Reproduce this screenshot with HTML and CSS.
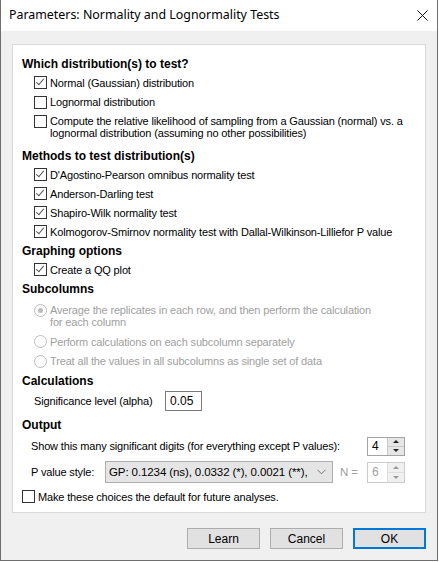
FILE: index.html
```html
<!DOCTYPE html>
<html>
<head>
<meta charset="utf-8">
<link rel="stylesheet" href="styles.css">
</head>
<body>
<div class="window">
  <div class="titlebar">
    <span class="title">Parameters: Normality and Lognormality Tests</span>
    <svg class="close" width="11" height="11" viewBox="0 0 11 11"><path d="M0.5 0.5 L10.5 10.5 M10.5 0.5 L0.5 10.5" stroke="#111" stroke-width="1" fill="none"/></svg>
  </div>
  <div class="body">
    <div class="panel">
      <div class="h h1">Which distribution(s) to test?</div>
      <div class="row r-normal"><span class="cb on"></span><span>Normal (Gaussian) distribution</span></div>
      <div class="row r-log"><span class="cb"></span><span>Lognormal distribution</span></div>
      <div class="row multi r-compute"><span class="cb"></span><span class="ml">Compute the relative likelihood of sampling from a Gaussian (normal) vs. a<br>lognormal distribution (assuming no other possibilities)</span></div>
      <div class="h">Methods to test distribution(s)</div>
      <div class="row"><span class="cb on"></span><span>D'Agostino-Pearson omnibus normality test</span></div>
      <div class="row"><span class="cb on"></span><span>Anderson-Darling test</span></div>
      <div class="row"><span class="cb on"></span><span>Shapiro-Wilk normality test</span></div>
      <div class="row"><span class="cb on"></span><span>Kolmogorov-Smirnov normality test with Dallal-Wilkinson-Lilliefor P value</span></div>
      <div class="h">Graphing options</div>
      <div class="row"><span class="cb on"></span><span>Create a QQ plot</span></div>
      <div class="h h-sub">Subcolumns</div>
      <div class="row multi r-radio1 dis"><span class="rb on"></span><span class="ml">Average the replicates in each row, and then perform the calculation<br>for each column</span></div>
      <div class="row dis"><span class="rb"></span><span>Perform calculations on each subcolumn separately</span></div>
      <div class="row dis r-radio3"><span class="rb"></span><span>Treat all the values in all subcolumns as single set of data</span></div>
      <div class="h">Calculations</div>
      <div class="row r-sig"><span class="lbl">Significance level (alpha)</span><span class="field sig">0.05</span></div>
      <div class="h h-out">Output</div>
      <div class="row r-show"><span class="lbl lbl2">Show this many significant digits (for everything except P values):</span><span class="spin"><span class="sv">4</span><span class="sb"><i class="up"></i><i class="dn"></i></span></span></div>
      <div class="row r-pval"><span class="lbl lbl2 pl">P value style:</span><span class="combo"><span class="ct">GP: 0.1234 (ns), 0.0332 (*), 0.0021 (**),</span><svg class="chev" width="9" height="6" viewBox="0 0 9 6"><path d="M0.5 0.8 L4.5 4.8 L8.5 0.8" stroke="#777" fill="none"/></svg></span><span class="neq">N =</span><span class="spin off"><span class="sv">6</span><span class="sb"><i class="up"></i><i class="dn"></i></span></span></div>
      <div class="row r-make"><span class="cb"></span><span>Make these choices the default for future analyses.</span></div>
    </div>
    <div class="buttons">
      <button class="btn">Learn</button>
      <button class="btn">Cancel</button>
      <button class="btn ok">OK</button>
    </div>
  </div>
</div>
</body>
</html>
```
FILE: styles.css
```css
html, body { margin: 0; padding: 0; background: #ffffff; }
body { font-family: "Liberation Sans", Arial, sans-serif; font-size: 11px; letter-spacing: -0.15px; color: #000; }
.window {
  width: 436px; height: 560px;
  border-left: 1px solid #6f6f6f; border-right: 1px solid #6f6f6f; border-bottom: 1px solid #6f6f6f;
  background: #f0f0f0; display: flex; flex-direction: column;
}
.titlebar {
  height: 31px; background: #fff; display: flex; align-items: center; justify-content: space-between;
  padding: 0 9px 0 8px; box-sizing: border-box;
}
.title { font-family: "Noto Sans", "Open Sans", sans-serif; font-size: 12.4px; letter-spacing: 0; color: #000; position: relative; top: -1px; }
.close { position: relative; top: 0; }
.body { flex: 1; padding: 13px 11px 0 11px; display: flex; flex-direction: column; }
.panel {
  height: 469px; background: #fff; border: 1px solid #d9d9d9; box-sizing: border-box;
  padding: 10px 8px 0 9px; display: flex; flex-direction: column;
}
.h { height: 19px; display: flex; align-items: center; font-weight: bold; font-size: 12px; letter-spacing: 0; }
.h1 { height: 18px; }
.h-sub { height: 20px; }
.row { height: 19px; display: flex; align-items: center; padding-left: 12px; white-space: nowrap; }
.r-log { height: 20px; }
.multi { align-items: flex-start; }
.r-compute { height: 34px; padding-top: 3px; box-sizing: border-box; }
.r-radio1 { height: 33px; padding-top: 5px; box-sizing: border-box; }
.r-radio3 { height: 20px; }
.ml { line-height: 12px; }
.cb {
  width: 11px; height: 11px; border: 1px solid #333; background: #fff; margin-right: 3px; flex: none; position: relative;
}
.cb.on::after {
  content: ""; position: absolute; left: 3px; top: 0px; width: 3px; height: 7px;
  border-right: 1.5px solid #555; border-bottom: 1.5px solid #555; transform: rotate(40deg);
}
.rb {
  width: 11px; height: 11px; border: 1px solid #bcbcbc; border-radius: 50%; background: #fff;
  margin-right: 3px; flex: none; position: relative;
}
.rb.on::after {
  content: ""; position: absolute; left: 3px; top: 3px; width: 5px; height: 5px; border-radius: 50%; background: #bcbcbc;
}
.dis { color: #a0a0a0; }
.r-sig { height: 22px; padding-left: 12px; }
.lbl { width: 131px; flex: none; }
.field {
  height: 18px; border: 1px solid #7a7a7a; display: flex; align-items: center; padding-left: 4px; box-sizing: content-box;
  font-size: 12px; letter-spacing: 0;
}
.sig { width: 31px; }
.h-out { height: 22px; margin-top: 2px; }
.r-show { height: 20px; padding-left: 9px; }
.lbl2 { width: 336px; }
.r-pval { height: 22px; padding-left: 9px; margin-top: 5px; }
.pl { width: 74px; }
.spin {
  width: 36px; height: 17px; border: 1px solid #a3a3a3; display: flex; background: #fff; flex: none;
}
.sv { flex: 1; padding-left: 4px; display: flex; align-items: center; font-size: 12px; letter-spacing: 0; }
.sb {
  width: 16px; display: flex; flex-direction: column; border-left: 1px solid #c9c9c9; background: #e6e6e6;
}
.sb i { flex: 1; display: flex; align-items: center; justify-content: center; position: relative; }
.sb i.up { border-bottom: 1px solid #c9c9c9; }
.sb i.up::after { content: ""; border-left: 3px solid transparent; border-right: 3px solid transparent; border-bottom: 3px solid #222; }
.sb i.dn::after { content: ""; border-left: 3px solid transparent; border-right: 3px solid transparent; border-top: 3px solid #222; }
.spin.off { border-color: #cccccc; height: 19px; }
.spin.off .sv { color: #a0a0a0; }
.spin.off .sb { background: #f0f0f0; border-left-color: #dedede; }
.spin.off .sb i.up { border-bottom-color: #dedede; }
.spin.off .sb i.up::after { border-bottom-color: #9a9a9a; }
.spin.off .sb i.dn::after { border-top-color: #9a9a9a; }
.combo {
  width: 226px; height: 20px; background: #e5e5e5; border: 1px solid #adadad; display: flex; align-items: center; flex: none;
}
.ct { flex: 1; padding-left: 3px; overflow: hidden; white-space: nowrap; font-size: 11.5px; letter-spacing: -0.1px; }
.chev { margin-right: 6px; margin-left: 4px; flex: none; }
.neq { color: #a0a0a0; margin-left: 7px; width: 27px; font-size: 11.5px; }
.r-make { height: 19px; padding-left: 0; margin-top: 4px; }
.buttons { display: flex; justify-content: flex-end; gap: 10px; margin-top: 15px; }
.btn {
  width: 73px; height: 21px; background: #e1e1e1; border: 1px solid #adadad; font-family: "Liberation Sans", Arial, sans-serif;
  font-size: 12px; color: #000; padding: 0; margin: 0; box-sizing: border-box;
}
.btn.ok { border: 2px solid #0078d7; }
```
